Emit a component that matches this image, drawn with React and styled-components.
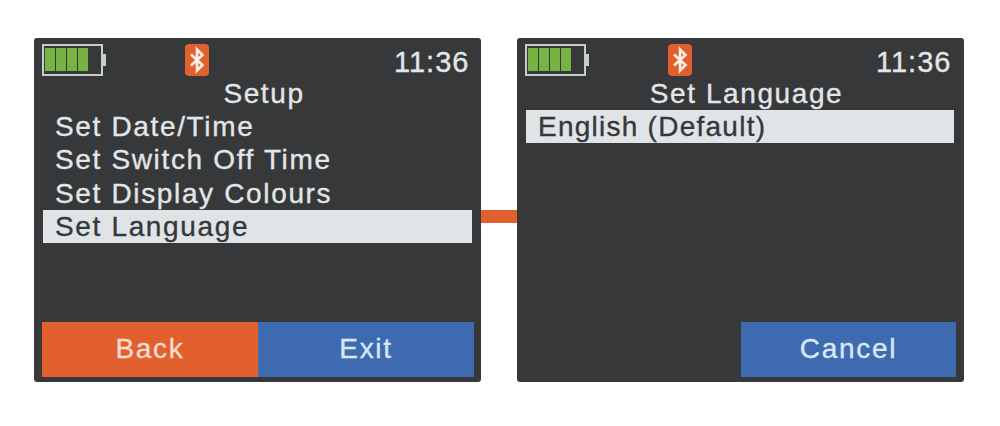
import styled, { createGlobalStyle } from 'styled-components'

const Global = createGlobalStyle`
    html, body {
        margin: 0;
        background: #fff;
    }
    * {
        box-sizing: border-box;
    }
`

const Page = styled.div`
    width: 1000px;
    height: 426px;
    padding: 38px 36px 44px 34px;
    display: flex;
    font-family: "Liberation Sans", Arial, sans-serif;
    -webkit-text-stroke: 0.35px currentColor;
`

const Screen = styled.div`
    width: 447px;
    height: 344px;
    padding: 6px ${p => p.$right}px 5px 8px;
    display: flex;
    flex-direction: column;
    background: #363839;
    border-radius: 3px;
    color: #e2e6e8;
`

const Connector = styled.div`
    width: 36px;
    height: 13px;
    margin-top: 172px;
    background: #e25f2e;
`

const StatusBar = styled.div`
    height: 32px;
    display: grid;
    grid-template-columns: 143px 1fr 74px;
    align-items: center;
    margin-right: 6px;
`

const Battery = styled.div`
    display: flex;
    align-items: center;
`

const BatteryShell = styled.div`
    width: 61px;
    height: 32px;
    padding: 2px 3px 3px 1px;
    display: flex;
    gap: 1.3px;
    border: 2px solid #c7cdc9;
`

const Cell = styled.div`
    width: 9.8px;
    background: #77b244;
`

const BatteryNub = styled.div`
    width: 3px;
    height: 12px;
    background: #c7cdc9;
`

const BluetoothBadge = styled.svg`
    width: 24px;
    height: 32px;
    display: block;
`

const Clock = styled.div`
    padding-top: 4px;
    font-size: 29px;
    line-height: 28px;
    letter-spacing: 1px;
    white-space: nowrap;
`

const Title = styled.div`
    height: 34px;
    padding: 1px 0 0 12px;
    text-align: center;
    font-size: 28px;
    line-height: 33px;
    letter-spacing: 1.6px;
`

const Menu = styled.div`
    display: flex;
    flex-direction: column;
`

const MenuItem = styled.div`
    height: 33.33px;
    margin: 0 2px 0 1px;
    padding-left: 12px;
    font-size: 28px;
    line-height: 33px;
    letter-spacing: ${p => p.$spacing || 1.65}px;
    white-space: nowrap;
    background: ${p => (p.$active ? '#e0e4e7' : 'transparent')};
    color: ${p => (p.$active ? '#35383a' : '#e2e6e8')};
`

const Actions = styled.div`
    margin-top: auto;
    height: 55px;
    display: flex;
    justify-content: flex-end;
`

const Action = styled.div`
    width: ${p => p.$width}px;
    padding-bottom: 1px;
    display: flex;
    align-items: center;
    justify-content: center;
    font-size: 28px;
    letter-spacing: 1.7px;
    background: ${p => (p.$tone === 'orange' ? '#e25f2e' : '#3e6bb0')};
    color: ${p => (p.$tone === 'orange' ? '#f6dcd0' : '#d9e6f6')};
`

function BatteryIcon() {
    return (
        <Battery>
            <BatteryShell>
                <Cell />
                <Cell />
                <Cell />
                <Cell />
            </BatteryShell>
            <BatteryNub />
        </Battery>
    )
}

function Bluetooth() {
    return (
        <BluetoothBadge viewBox="0 0 24 32">
            <rect width="24" height="32" rx="4" fill="#e25f2e" />
            <path
                d="M6 10.5 L17.5 21 L12 26.5 V5.5 L17.5 11 L6 21.5"
                fill="none"
                stroke="#f8efe8"
                strokeWidth="2.6"
            />
        </BluetoothBadge>
    )
}

function Status() {
    return (
        <StatusBar>
            <BatteryIcon />
            <Bluetooth />
            <Clock>11:36</Clock>
        </StatusBar>
    )
}

export default function App() {
    return (
        <Page>
            <Global />
            <Screen $right={7}>
                <Status />
                <Title>Setup</Title>
                <Menu>
                    <MenuItem>Set Date/Time</MenuItem>
                    <MenuItem>Set Switch Off Time</MenuItem>
                    <MenuItem>Set Display Colours</MenuItem>
                    <MenuItem $active>Set Language</MenuItem>
                </Menu>
                <Actions>
                    <Action $tone="orange" $width={216}>Back</Action>
                    <Action $tone="blue" $width={216}>Exit</Action>
                </Actions>
            </Screen>
            <Connector />
            <Screen $right={8}>
                <Status />
                <Title>Set Language</Title>
                <Menu>
                    <MenuItem $active $spacing={1.25}>English (Default)</MenuItem>
                </Menu>
                <Actions>
                    <Action $tone="blue" $width={215}>Cancel</Action>
                </Actions>
            </Screen>
        </Page>
    )
}
